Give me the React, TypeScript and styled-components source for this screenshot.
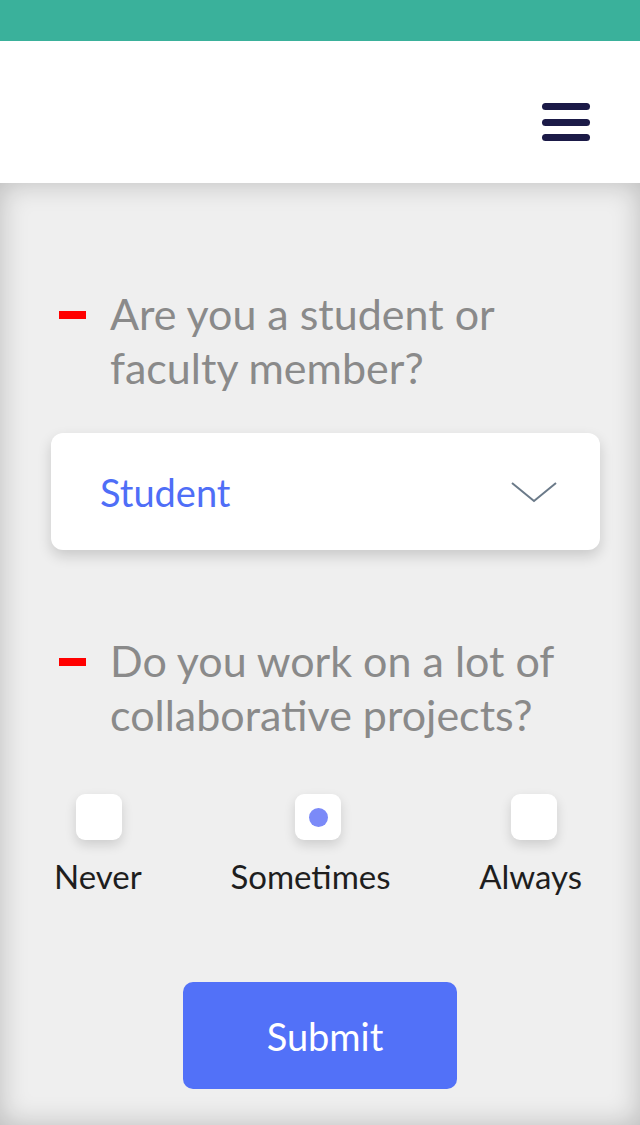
import React from "react";
import styled, { createGlobalStyle } from "styled-components";

const Global = createGlobalStyle`
  html, body { margin: 0; padding: 0; }
  body { font-family: Lato, "Open Sans", sans-serif; background: #efefef; }
  * { box-sizing: border-box; }
`;

const Page = styled.div`
  width: 640px;
  min-height: 1125px;
  display: flex;
  flex-direction: column;
`;

const TopBar = styled.div`
  height: 41px;
  background: #3ab19b;
`;

const Header = styled.header`
  height: 142px;
  background: #ffffff;
  display: flex;
  align-items: center;
  justify-content: flex-end;
  padding-right: 50px;
`;

const MenuButton = styled.button`
  width: 48px;
  display: flex;
  flex-direction: column;
  gap: 8.5px;
  padding: 0;
  margin-top: 20px;
  border: none;
  background: transparent;
`;

const MenuLine = styled.span`
  display: block;
  height: 7px;
  border-radius: 4px;
  background: #1b1a47;
`;

const Main = styled.main`
  flex: 1;
  height: 942px;
  background: #efefef;
  box-shadow: inset 0 0 28px rgba(0, 0, 0, 0.22);
  padding: 104px 40px 0 51px;
  display: flex;
  flex-direction: column;
`;

const Question = styled.div<{ $mt?: number }>`
  display: flex;
  align-items: flex-start;
  padding-left: 8px;
  margin-top: ${(p) => p.$mt ?? 0}px;
`;

const Dash = styled.span`
  flex: none;
  width: 27px;
  height: 8px;
  background: #ff0000;
  margin-top: 24px;
  margin-right: 24px;
`;

const QuestionText = styled.h2`
  margin: 0;
  font-weight: 400;
  font-size: 43px;
  line-height: 54px;
  color: #8a8a8a;
`;

const Select = styled.div`
  margin-top: 38px;
  height: 117px;
  background: #ffffff;
  border-radius: 12px;
  box-shadow: 0 6px 14px rgba(0, 0, 0, 0.16);
  display: flex;
  align-items: center;
  justify-content: space-between;
  padding: 0 43px 0 49px;
`;

const SelectValue = styled.span`
  font-size: 38px;
  color: #4f6ef7;
`;

const Options = styled.div`
  margin-top: 52px;
  display: flex;
  justify-content: space-between;
  padding-left: 3px;
  padding-right: 18px;
`;

const Option = styled.label<{ $shift?: number }>`
  display: flex;
  flex-direction: column;
  align-items: center;
  gap: 18px;
  margin-left: ${(p) => p.$shift ?? 0}px;
`;

const RadioBox = styled.span<{ $offset?: number }>`
  width: 46px;
  height: 46px;
  border-radius: 9px;
  background: #ffffff;
  box-shadow: 0 5px 12px rgba(0, 0, 0, 0.14);
  display: flex;
  align-items: center;
  justify-content: center;
  transform: translateX(${(p) => p.$offset ?? 0}px);
`;

const RadioDot = styled.span`
  width: 19px;
  height: 19px;
  border-radius: 50%;
  background: #7b8af8;
`;

const OptionLabel = styled.span`
  font-size: 33px;
  line-height: 36px;
  color: #1e1e1e;
`;

const SubmitRow = styled.div`
  margin-top: 88px;
  display: flex;
  justify-content: center;
  padding-right: 11px;
`;

const SubmitButton = styled.button`
  width: 274px;
  height: 107px;
  border: none;
  border-radius: 10px;
  background: #5271f8;
  color: #ffffff;
  font-family: inherit;
  font-size: 38px;
  padding: 0 0 0 10px;
`;

const Chevron = () => (
  <svg width="46" height="22" viewBox="0 0 46 22" fill="none">
    <path d="M1 2 L23 20 L45 2" stroke="#6b7a89" strokeWidth="2" />
  </svg>
);

const options = [
  { label: "Never", checked: false, offset: 1 },
  { label: "Sometimes", checked: true, offset: 8 },
  { label: "Always", checked: false, offset: 3 },
];

export default function App() {
  return (
    <Page>
      <Global />
      <TopBar />
      <Header>
        <MenuButton aria-label="menu">
          <MenuLine />
          <MenuLine />
          <MenuLine />
        </MenuButton>
      </Header>
      <Main>
        <Question>
          <Dash />
          <QuestionText>Are you a student or faculty member?</QuestionText>
        </Question>
        <Select>
          <SelectValue>Student</SelectValue>
          <Chevron />
        </Select>
        <Question $mt={84}>
          <Dash />
          <QuestionText>Do you work on a lot of collaborative projects?</QuestionText>
        </Question>
        <Options>
          {options.map((o) => (
            <Option key={o.label}>
              <RadioBox $offset={o.offset}>{o.checked && <RadioDot />}</RadioBox>
              <OptionLabel>{o.label}</OptionLabel>
            </Option>
          ))}
        </Options>
        <SubmitRow>
          <SubmitButton>Submit</SubmitButton>
        </SubmitRow>
      </Main>
    </Page>
  );
}
